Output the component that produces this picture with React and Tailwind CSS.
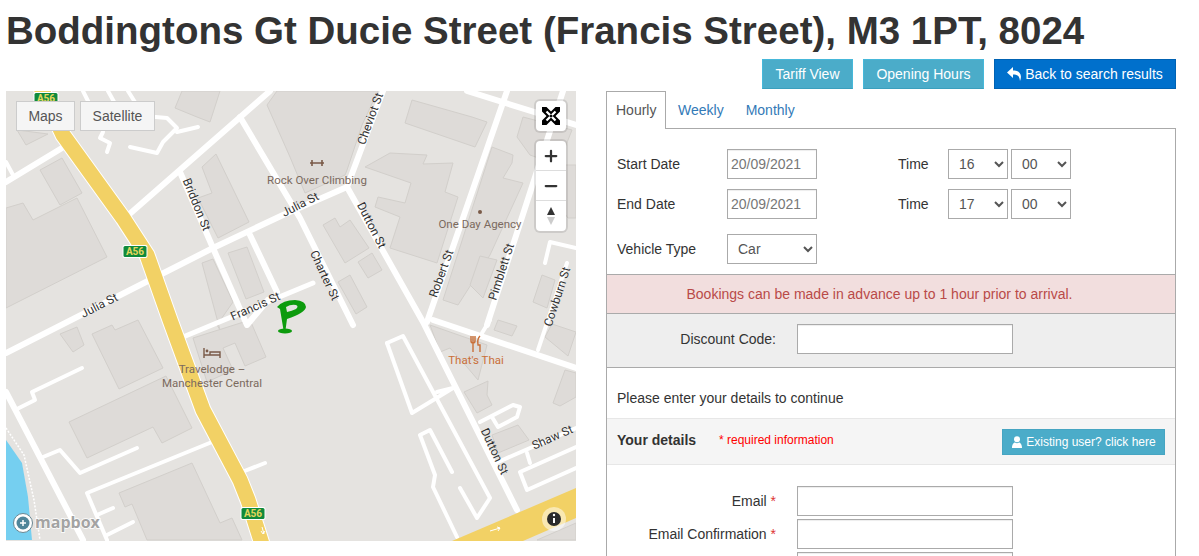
import React from 'react';
import { Plus, Minus } from 'lucide-react';

const FONT = "font-['Liberation_Sans',Arial,sans-serif]";

const buildings = [
  "6,208 23,203 33,220 77,198 107,257 6,308",
  "40,170 62,158 82,193 60,205",
  "17,130 48,134 26,145",
  "175,108 182,91 220,91 210,122 197,117",
  "202,167 216,154 249,222 218,238 198,198 212,193",
  "202,263 213,259 233,302 217,325 220,330",
  "228,253 247,247 264,292 246,299",
  "267,105 277,91 378,91 362,125 347,170 345,175 305,193 290,157",
  "365,167 390,153 427,155 423,164 453,163 445,192 458,197 437,263 390,248 400,217 375,207 378,197 405,203 411,183",
  "405,123 412,100 472,117 487,122 475,147",
  "492,147 513,155 512,163 503,178 523,183 490,255 458,305 443,300",
  "323,225 335,218 340,227 350,220 369,248 345,263",
  "358,262 372,253 382,270 368,278",
  "338,282 350,275 367,307 356,314",
  "517,137 523,117 572,130 558,165 530,155",
  "533,302 542,275 555,280 547,308",
  "470,285 480,256 497,260 483,298",
  "555,200 565,165 576,165 576,218 568,218",
  "60,334 77,327 84,345 73,352",
  "92,334 112,325 115,330 138,320 163,368 119,389",
  "69,422 166,376 192,428 162,443 153,427 87,458",
  "119,493 192,463 220,523 232,518 242,540 147,540 132,504 125,507",
  "193,338 250,320 266,357 245,366 235,343 223,348 233,370 207,382",
  "430,325 487,345 478,380 467,367 450,348 440,352",
  "464,392 488,381 487,395 492,405 477,413",
  "492,435 518,425 529,440 498,453",
  "494,330 498,320 517,326 512,336",
  "553,403 565,370 576,373 576,397 560,406",
  "545,337 552,324 576,332 568,356",
  "537,540 576,523 576,540",
];

// main roads, 6px wide
const wideRoads = [
  "270,91 125,218",
  "6,182 62,148",
  "240,117 300,218 353,325",
  "383,91 347,187 423,322 517,510",
  "6,353 140,285 213,248 283,215 347,187",
  "180,172 213,248 247,325 268,300",
  "507,91 427,322",
  "563,91 487,325",
  "467,91 576,125",
  "433,320 576,368",
  "6,392 83,540",
  "250,235 277,292",
];

// service roads, 4px wide
const thinRoads = [
  "83,91 90,105",
  "108,91 123,118",
  "128,91 143,115",
  "6,162 13,175",
  "133,115 167,118 177,128 163,142 157,153 130,147",
  "177,132 198,127",
  "103,132 100,138 110,143 107,152",
  "82,368 32,392 35,400 17,409",
  "43,457 60,450 80,473 137,448",
  "212,442 87,493 107,540",
  "97,515 113,508",
  "107,535 133,522",
  "242,472 265,463",
  "387,343 403,336 490,498 477,518 460,488",
  "387,343 412,413 453,388 437,392",
  "452,472 430,430 420,435 435,475 433,487 457,537",
  "498,462 576,428",
  "480,422 513,405 520,407 517,417 498,427 492,417",
  "527,453 530,463",
  "576,447 520,472 527,490 576,468",
  "567,263 538,350",
  "576,248 550,242 545,263",
  "490,320 482,333",
];

const labels = [
  { t: "Julia St", x: 101, y: 309, r: -27 },
  { t: "Francis St", x: 257, y: 310, r: -24 },
  { t: "Julia St", x: 302, y: 208, r: -27 },
  { t: "Briddon St", x: 193, y: 206, r: 68 },
  { t: "Charter St", x: 321, y: 277, r: 65 },
  { t: "Dutton St", x: 368, y: 227, r: 63 },
  { t: "Dutton St", x: 491, y: 453, r: 65 },
  { t: "Cheviot St", x: 374, y: 120, r: -70 },
  { t: "Robert St", x: 445, y: 275, r: -70 },
  { t: "Pimblett St", x: 505, y: 273, r: -72 },
  { t: "Cowburn St", x: 561, y: 298, r: -72 },
  { t: "Shaw St", x: 554, y: 441, r: -24 },
];

function Shield({ x, y }) {
  return (
    <g>
      <rect x={x - 12.5} y={y - 7} width="25" height="13" rx="2" fill="#fff" />
      <rect x={x - 11.5} y={y - 6} width="23" height="11" rx="1.5" fill="#0f8a3c" />
      <text x={x} y={y + 3} textAnchor="middle" fontSize="10" fontWeight="700" fill="#e3d65c" fontFamily="Roboto, sans-serif">A56</text>
    </g>
  );
}

function MapDrawing() {
  return (
    <svg viewBox="6 91 570 450" className="block w-full h-full">
      <rect x="6" y="91" width="570" height="450" fill="#e5e3e0" />
      <polygon points="6,440 22,463 28,497 32,540 6,540" fill="#75cff0" />
      <polyline points="6,428 24,455 34,500 40,540" fill="none" stroke="#fff" strokeWidth="1.5" strokeDasharray="2 1.5" />
      {buildings.map((b, i) => (
        <polygon key={i} points={b} fill="#dedbd8" stroke="#d2cfcb" strokeWidth="1" />
      ))}
      {wideRoads.map((r, i) => (
        <polyline key={i} points={r} fill="none" stroke="#fff" strokeWidth="6" strokeLinejoin="round" strokeLinecap="round" />
      ))}
      {thinRoads.map((r, i) => (
        <polyline key={i} points={r} fill="none" stroke="#fff" strokeWidth="4" strokeLinejoin="round" strokeLinecap="round" />
      ))}
      <polyline points="183,337 313,283" fill="none" stroke="#fff" strokeWidth="5" strokeLinecap="round" />
      <polyline points="41,88 63,135 123,218 147,255 170,320 203,410 240,480 248,500 262,544" fill="none" stroke="#fff" strokeWidth="17" />
      <polyline points="41,88 63,135 123,218 147,255 170,320 203,410 240,480 248,500 262,544" fill="none" stroke="#f2d165" strokeWidth="15" />
      <polygon points="452,541 576,488 576,518 523,541" fill="#f2d165" />
      <path d="M262 527l2 7M263 534l-2-3M263 534l2-3" stroke="#fff" strokeWidth="1" fill="none" />
      <path d="M490 531l10-3M500 528l-3-1M500 528l-2 3" stroke="#fff" strokeWidth="1" fill="none" />
      <Shield x={46} y={99} />
      <Shield x={135} y={252} />
      <Shield x={253} y={514} />

      {labels.map((l) => (
        <text key={l.t + l.x} transform={`translate(${l.x} ${l.y}) rotate(${l.r})`} textAnchor="middle" fontSize="12" fill="#333" stroke="#fff" strokeWidth="0.4" paintOrder="stroke" fontFamily="Roboto, sans-serif">{l.t}</text>
      ))}

      {/* poi labels */}
      <text x="317" y="184" textAnchor="middle" fontSize="11.5" fill="#7b6a5e" fontFamily="Roboto, sans-serif">Rock Over Climbing</text>
      <text x="480" y="228" textAnchor="middle" fontSize="11.5" fill="#7b6a5e" fontFamily="Roboto, sans-serif">One Day Agency</text>
      <text x="212" y="373" textAnchor="middle" fontSize="11.5" fill="#7b6a5e" fontFamily="Roboto, sans-serif">Travelodge –</text>
      <text x="212" y="387" textAnchor="middle" fontSize="11.5" fill="#7b6a5e" fontFamily="Roboto, sans-serif">Manchester Central</text>
      <text x="476" y="364" textAnchor="middle" fontSize="11.5" fill="#c96f38" fontFamily="Roboto, sans-serif">That's Thai</text>

      {/* poi icons */}
      <path d="M310 163h14M312 160v6M322 160v6" stroke="#7a5a48" strokeWidth="1.6" fill="none" />
      <circle cx="480" cy="212" r="2" fill="#7a5a48" />
      <path d="M204 348v10M204 355h16v3M220 355v-3h-10v3" stroke="#7a5a48" strokeWidth="1.4" fill="none" />
      <circle cx="207" cy="351" r="1.4" fill="#7a5a48" />
      <path d="M473 336v16M475 336v5q0 2-2 2t-2-2v-5M480 336q-3 3-2 9h2v7" stroke="#c96f38" strokeWidth="1.4" fill="none" />

      {/* parking marker */}
      <ellipse cx="285" cy="331" rx="7" ry="2.5" fill="#0d9b0d" />
      <path fillRule="evenodd" fill="#0d9b0d" d="M277 307Q283 300 295 300Q306 301 306 307Q305 313 287 319L285.500 330L283.500 330L280 309ZM286 307Q291 304 296 305Q299 306 296 309Q292 311 287 312Z" />

      {/* mapbox logo */}
      <circle cx="23" cy="523" r="9.5" fill="#fff" stroke="#6b8792" strokeWidth="1" />
      <circle cx="23" cy="523" r="6.500" fill="#4f8599" />
      <path d="M20 523h6M23 520v6" stroke="#fff" strokeWidth="1.5" />
      <text x="35" y="528" fontSize="16" fontWeight="700" fill="#a3a3a3" stroke="#fff" strokeWidth="1.5" paintOrder="stroke" fontFamily="'Open Sans', sans-serif">mapbox</text>

      {/* info button */}
      <circle cx="554" cy="519" r="12" fill="#fff" fillOpacity="0.5" />
      <circle cx="554" cy="519" r="7" fill="#2b2b2b" />
      <path d="M554 518v5" stroke="#fff" strokeWidth="2" />
      <circle cx="554" cy="515" r="1.2" fill="#fff" />
    </svg>
  );
}

function LabelText({ children, className = "" }) {
  return <span className={`text-[14px] text-[#333] ${className}`}>{children}</span>;
}

function DateInput({ value }) {
  return <input readOnly value={value} className="w-[90px] h-[30px] border border-[#aaa] px-[3px] text-[14px] text-[#777] bg-white shadow-[inset_0_1px_1px_rgba(0,0,0,0.075)]" />;
}

function SelectBox({ value, width }) {
  return (
    <select value={value} readOnly className={`${width} h-[30px] border border-[#aaa] bg-white pl-[6px] text-[14px] text-[#555]`}>
      <option>{value}</option>
    </select>
  );
}

function TextInput() {
  return <input className="w-[216px] h-[30px] border border-[#aaa] bg-white shadow-[inset_0_1px_1px_rgba(0,0,0,0.075)]" />;
}

function InfoButton({ children, className = "" }) {
  return (
    <button className={`h-[30px] border border-[#46b8da] border-b-[#3a9fbd] bg-[#4bacc9] text-white text-[14px] ${className}`}>
      {children}
    </button>
  );
}

export default function App() {
  return (
    <div className={`${FONT} w-[1199px] h-[556px] overflow-hidden bg-white text-[#333]`}>
      <h1 className="m-0 pl-[6px] pt-[8px] text-[38.500px] leading-[46px] font-bold text-[#333] whitespace-nowrap">
        Boddingtons Gt Ducie Street (Francis Street), M3 1PT, 8024
      </h1>

      <div className="flex justify-end gap-[10px] mt-[5px] pr-[23px]">
        <InfoButton className="w-[91px]">Tariff View</InfoButton>
        <InfoButton className="w-[121px]">Opening Hours</InfoButton>
        <button className="h-[30px] w-[182px] bg-[#0070cc] border border-[#0062b3] text-white text-[14px] flex items-center justify-center gap-[3px]">
          <svg width="15" height="14" viewBox="0 0 15 14" fill="#fff"><path d="M6 0L0 5.500l6 5.500V7.500c4 0 6.500 1 7 6.500 2.500-6 0-10.500-7-10.500z" /></svg>
          Back to search results
        </button>
      </div>

      <div className="flex mt-[2px] pl-[6px] gap-[30px]">
        {/* map */}
        <div className="relative w-[570px] h-[450px] shrink-0">
          <MapDrawing />
          <div className="absolute left-[10px] top-[10px] flex gap-[5px]">
            <button className="w-[59px] h-[30px] bg-[#f5f5f5] border border-[#ccc] text-[14px] text-[#555]">Maps</button>
            <button className="w-[75px] h-[30px] bg-[#f5f5f5] border border-[#ccc] text-[14px] text-[#555]">Satellite</button>
          </div>
          <div className="absolute right-[10px] top-[10px] w-[30px] h-[30px] bg-white rounded-[4px] flex items-center justify-center shadow-[0_0_0_2px_rgba(0,0,0,0.1)]">
            <svg width="18" height="18" viewBox="0 0 20 20">
              <rect width="20" height="20" fill="#000" />
              <path d="M5 0h10L10 5zM5 20h10l-5-5zM0 5v10l5-5zM20 5v10l-5-5z" fill="#fff" />
              <path d="M5 5l10 10M15 5L5 15" stroke="#fff" strokeWidth="2.500" />
              <path d="M10 8l2 2-2 2-2-2z" fill="#000" />
            </svg>
          </div>
          <div className="absolute right-[10px] top-[50px] w-[30px] bg-white rounded-[4px] flex flex-col shadow-[0_0_0_2px_rgba(0,0,0,0.1)]">
            <div className="h-[30px] flex items-center justify-center border-b border-[#ddd]"><Plus size={18} strokeWidth={3} color="#333" /></div>
            <div className="h-[30px] flex items-center justify-center border-b border-[#ddd]"><Minus size={18} strokeWidth={3} color="#333" /></div>
            <div className="h-[30px] flex items-center justify-center">
              <svg width="10" height="18" viewBox="0 0 10 18"><path d="M5 0l4 8H1z" fill="#333" /><path d="M5 18l4-8H1z" fill="#ccc" /></svg>
            </div>
          </div>
        </div>

        {/* booking form */}
        <div className="w-[570px] shrink-0">
          <div className="flex h-[38px] text-[14px]">
            <div className="w-[60px] h-[38px] border border-[#aaa] border-b-0 bg-white relative z-10 flex items-center pl-[9px] text-[#555]">Hourly</div>
            <div className="flex items-center text-[#337ab7] ml-[12px]">Weekly</div>
            <div className="flex items-center text-[#337ab7] ml-[22px]">Monthly</div>
          </div>
          <div className="border border-[#aaa] -mt-px">
            <div className="h-[145px] pt-[20px] pl-[10px]">
              <div className="flex items-center h-[30px]">
                <LabelText className="w-[110px]">Start Date</LabelText>
                <DateInput value="20/09/2021" />
                <LabelText className="w-[50px] ml-[81px]">Time</LabelText>
                <SelectBox value="16" width="w-[60px]" />
                <SelectBox value="00" width="w-[60px] ml-[3px]" />
              </div>
              <div className="flex items-center h-[30px] mt-[10px]">
                <LabelText className="w-[110px]">End Date</LabelText>
                <DateInput value="20/09/2021" />
                <LabelText className="w-[50px] ml-[81px]">Time</LabelText>
                <SelectBox value="17" width="w-[60px]" />
                <SelectBox value="00" width="w-[60px] ml-[3px]" />
              </div>
              <div className="flex items-center h-[30px] mt-[15px]">
                <LabelText className="w-[110px]">Vehicle Type</LabelText>
                <SelectBox value="Car" width="w-[90px]" />
              </div>
            </div>
            <div className="h-[40px] bg-[#f2dede] border-y border-[#aaa] flex items-center justify-center pr-[23px] text-[14px] text-[#b94a48]">
              Bookings can be made in advance up to 1 hour prior to arrival.
            </div>
            <div className="h-[54px] bg-[#eee] border-b border-[#aaa] pt-[10px] flex items-start">
              <LabelText className="w-[169px] text-right leading-[30px]">Discount Code:</LabelText>
              <div className="ml-[21px]"><TextInput /></div>
            </div>
            <div className="h-[50px] pl-[10px] pt-[20px] text-[14px] leading-[20px] text-[#333]">Please enter your details to continue</div>
            <div className="h-[47px] bg-[#f5f5f5] border-y border-[#e7e7e7] flex items-center pl-[10px] pr-[10px]">
              <span className="text-[14px] font-bold text-[#333] w-[102px] -mt-[3px]">Your details</span>
              <span className="text-[12px] text-[#f00] -mt-[3px]">* required information</span>
              <button className="ml-auto w-[163px] h-[26px] bg-[#4bacc9] border border-[#46a5c2] text-white text-[12px] flex items-center justify-center gap-[3px] mt-[1px]">
                <svg width="12" height="12" viewBox="0 0 12 12" fill="#fff"><circle cx="6" cy="3.200" r="3" /><path d="M1 12c0-4 2-5.500 3-5.500q2 1.500 4 0c1 0 3 1.500 3 5.500z" /></svg>
                Existing user? click here
              </button>
            </div>
            <div className="pt-[21px] pb-[20px]">
              <div className="flex items-center h-[30px]">
                <LabelText className="w-[169px] text-right">Email <span className="text-[#d33]">*</span></LabelText>
                <div className="ml-[21px]"><TextInput /></div>
              </div>
              <div className="flex items-center h-[30px] mt-[3px]">
                <LabelText className="w-[169px] text-right">Email Confirmation <span className="text-[#d33]">*</span></LabelText>
                <div className="ml-[21px]"><TextInput /></div>
              </div>
              <div className="flex items-center h-[30px] mt-[3px]">
                <div className="ml-[190px]"><TextInput /></div>
              </div>
            </div>
          </div>
        </div>
      </div>
    </div>
  );
}
